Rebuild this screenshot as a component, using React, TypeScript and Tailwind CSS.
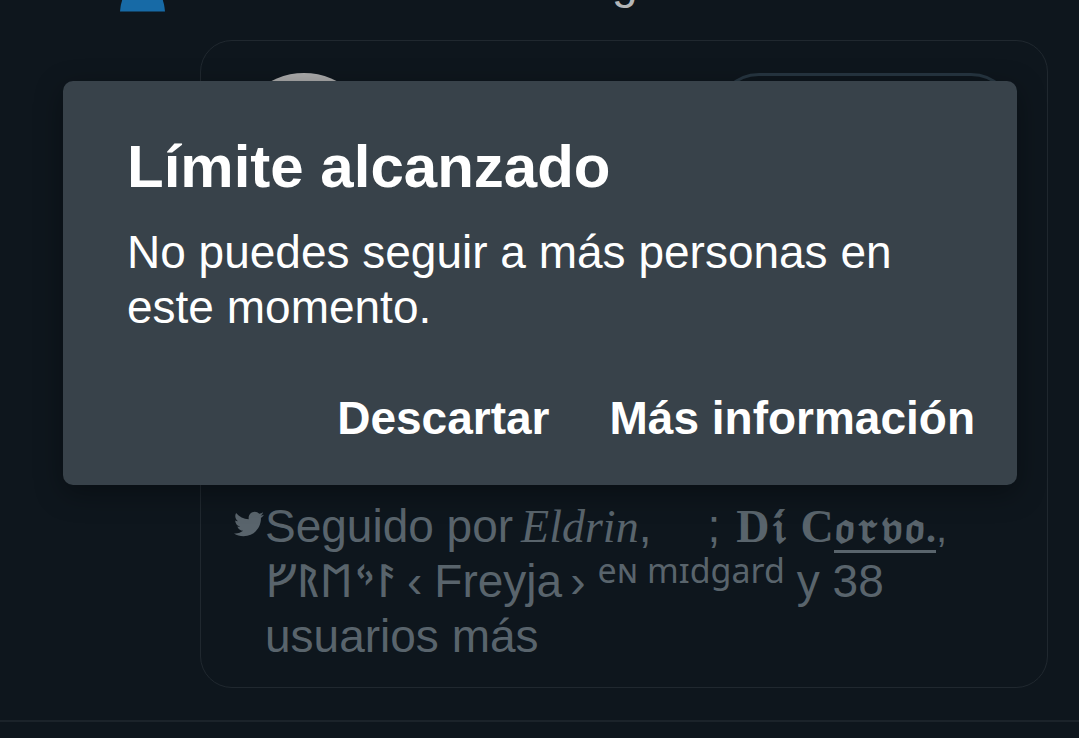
import React from "react";
import { FaTwitter } from "react-icons/fa";

function NotificationHeader() {
  return (
    <header className="flex h-10 items-start overflow-hidden pl-[120px]">
      <svg width="45" height="12" viewBox="0 0 45 12" className="shrink-0" aria-hidden="true">
        <path d="M3 -2 H42 Q44.600 4 45 11.500 H0 Q0.400 4 3 -2 Z" fill="#176aa6" />
      </svg>
      <p className="-mt-[45px] ml-[447px] text-[46px] leading-[55px] text-[#b4b6b8]">g</p>
    </header>
  );
}

function SuggestedUserCard() {
  return (
    <article className="ml-[200px] mr-[31px] rounded-[32px] border border-[#20282f] px-8 pb-[23px] pt-8">
      <div className="flex items-start justify-between">
        <div className="size-[142px] rounded-full bg-[#ababab]" />
        <button
          type="button"
          aria-label="Seguir"
          className="h-[88px] w-[300px] rounded-full border-[3px] border-[#263540]"
        />
      </div>
      <div className="mt-[284px] flex items-start gap-px pl-px text-[46px] leading-[55px] text-[#59646c]">
        <FaTwitter className="mt-[10px] size-[30px] shrink-0" aria-hidden="true" />
        <div className="whitespace-nowrap">
          <div className="flex h-[55px] items-baseline">
            <span>Seguido por</span>
            <span className="ml-2 font-['Liberation_Serif',serif] italic leading-10">Eldrin</span>
            <span>,</span>
            <span className="ml-14">;</span>
            <span className="ml-4 font-['Liberation_Serif',serif] font-bold leading-10">D</span>
            <span className="ml-px font-['DejaVu_Math_TeX_Gyre','DejaVu_Sans',serif] text-[40px] font-bold leading-none">𝔦́</span>
            <span className="ml-3 font-['Liberation_Serif',serif] font-bold leading-10">C</span>
            <span className="border-b-[3px] border-[#59646c] font-['DejaVu_Math_TeX_Gyre','DejaVu_Sans',serif] text-[40px] font-bold leading-none">
              𝔬𝔯𝔳𝔬<span className="font-['Liberation_Serif',serif]">.</span>
            </span>
            <span className="text-[40px] leading-10">,</span>
          </div>
          <div className="flex h-[55px] items-baseline">
            <span className="font-['Noto_Sans_Runic','DejaVu_Sans',sans-serif] leading-10">ᚠᚱᛖᛃᚨ</span>
            <span className="ml-3">‹</span>
            <span className="ml-3">Freyja</span>
            <span className="ml-2">›</span>
            <span className="relative -top-3.5 ml-3 font-['Noto_Sans',sans-serif] text-[34px] leading-none">
              eɴ mɪdgard
            </span>
            <span className="ml-3">y 38</span>
          </div>
          <div className="h-[55px]">usuarios más</div>
        </div>
      </div>
    </article>
  );
}

function LimitDialog() {
  return (
    <div className="absolute inset-x-0 top-0 pl-[63px] pr-[62px] pt-[81px]">
      <section
        role="alertdialog"
        aria-labelledby="limit-title"
        aria-describedby="limit-text"
        className="rounded-[10px] bg-[#38424a] pb-[39px] pl-16 pr-[42px] pt-[52px] text-white shadow-[0_8px_28px_rgba(0,0,0,0.35)]"
      >
        <h1 id="limit-title" className="text-[60px] font-bold leading-[68px]">
          Límite alcanzado
        </h1>
        <p id="limit-text" className="mt-6 text-[46px] leading-[55px]">
          No puedes seguir a más personas en este momento.
        </p>
        <div className="mt-14 flex justify-end gap-[60px] text-[46px] font-bold leading-[55px]">
          <button type="button">Descartar</button>
          <button type="button">Más información</button>
        </div>
      </section>
    </div>
  );
}

export default function App() {
  return (
    <main className="relative min-h-screen overflow-hidden bg-[#0e161d] font-['Liberation_Sans',Arial,sans-serif]">
      <NotificationHeader />
      <SuggestedUserCard />
      <hr className="mt-8 border-t-2 border-[#1b232a]" />
      <LimitDialog />
    </main>
  );
}
